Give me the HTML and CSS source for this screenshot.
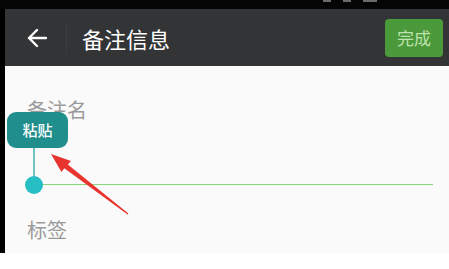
FILE: index.html
```html
<!DOCTYPE html>
<html>
<head lang="zh">
    <meta charset="UTF-8">
    <title>备注信息</title>
    <link rel="stylesheet" href="styles.css">
</head>
<body>
<div class="status">
    <span class="sig"></span><span class="sig"></span><span class="bat"></span>
</div>
<div class="frame">
    <div class="header">
        <svg class="back" width="20" height="20" viewBox="0 0 20 20">
            <path d="M19 10H2M10 2L2 10L10 18" fill="none" stroke="#fff" stroke-width="2.4" stroke-linecap="round" stroke-linejoin="round"/>
        </svg>
        <span class="divider"></span>
        <span class="title">备注信息</span>
        <span class="done">完成</span>
    </div>
    <div class="content">
        <div class="label">备注名</div>
        <div class="field"></div>
        <div class="label tag">标签</div>
    </div>
</div>

<!-- 粘贴 弹出气泡 -->
<div class="paste">粘贴</div>
<div class="stem"></div>
<div class="handle"></div>

<!-- 红色指示箭头 -->
<svg class="mark" width="449" height="269" viewBox="0 0 449 269">
    <polygon points="51,154 71,161 67.8,164.6 128.4,213.5 127.6,214.5 64.3,168.2 61.5,172" fill="#e8342f"/>
</svg>
</body>
</html>
```

FILE: styles.css
```css
* {
    padding: 0;
    margin: 0;
    box-sizing: border-box;
}

body {
    width: 449px;
    height: 269px;
    background: #fff;
    font-family: "Noto Sans CJK SC", "Noto Sans", sans-serif;
    position: relative;
    overflow: hidden;
}

.status {
    height: 9px;
    background: #050505;
    display: flex;
    align-items: flex-start;
    padding-left: 323px;
    gap: 12px;
}

.status span {
    height: 2px;
    background: #6a6a6a;
}

.status .sig {
    width: 8px;
}

.status .bat {
    width: 14px;
}

.frame {
    border-left: 5px solid #000;
}

.header {
    height: 57px;
    background: #333436;
    display: flex;
    align-items: center;
    padding-left: 22px;
    padding-right: 6px;
}

.back {
    display: block;
}

.divider {
    width: 1px;
    height: 30px;
    background: #3c3d3f;
    margin-left: 19px;
}

.title {
    margin-left: 15px;
    font-size: 22px;
    color: #fff;
    line-height: 26px;
}

.done {
    margin-left: auto;
    width: 58px;
    height: 38px;
    line-height: 38px;
    text-align: center;
    background: #4a993a;
    border-radius: 4px;
    color: #bfe3ae;
    font-size: 17px;
}

.content {
    height: 187px;
    background: #fafafa;
    padding: 33px 16px 0 22px;
}

.label {
    font-size: 20px;
    line-height: 22px;
    color: #9a9a9a;
}

.field {
    height: 64px;
    border-bottom: 1px solid #86d67a;
}

.tag {
    margin-top: 34px;
}

.paste {
    position: absolute;
    left: 7px;
    top: 112px;
    width: 61px;
    height: 36px;
    line-height: 36px;
    border-radius: 9px;
    background: #218e8e;
    color: #fff;
    font-size: 15px;
    font-weight: 500;
    text-align: center;
}

.stem {
    position: absolute;
    left: 33px;
    top: 148px;
    width: 2px;
    height: 30px;
    background: #74c3c5;
}

.handle {
    position: absolute;
    left: 25px;
    top: 176px;
    width: 18px;
    height: 18px;
    border-radius: 50%;
    background: #27bfc4;
}

.mark {
    position: absolute;
    left: 0;
    top: 0;
}
```
